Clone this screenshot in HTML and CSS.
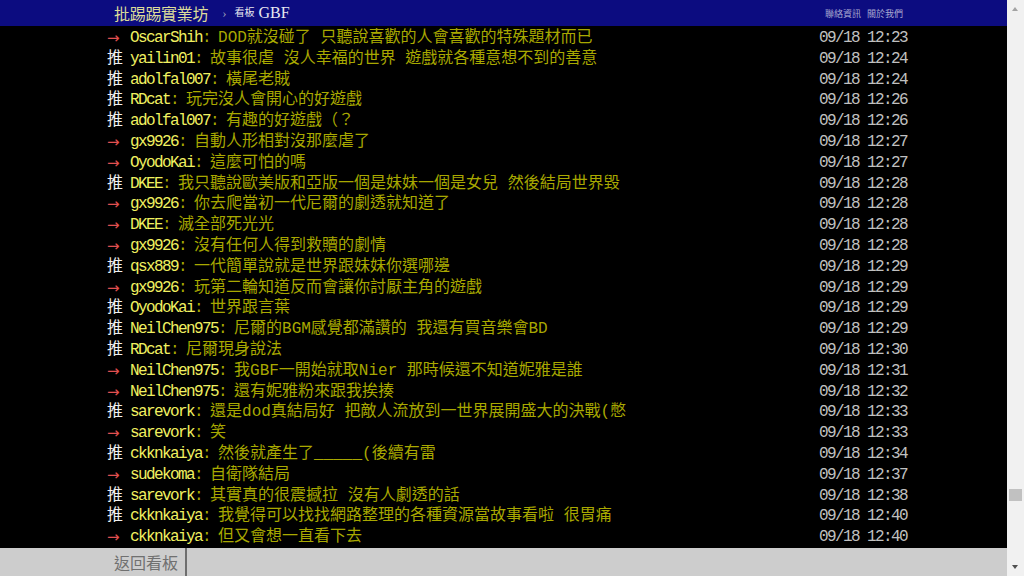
FILE: index.html
```html
<!DOCTYPE html>
<html>

<head>
    <meta charset="UTF-8">
    <title>批踢踢實業坊 › 看板 GBF</title>
    <meta name="viewport" content="width=device-width, initial-scale=1.0">
    <link rel="stylesheet" href="styles.css">
</head>

<body>
    <div class="page">
        <div class="topbar">
            <a class="logo">批踢踢實業坊</a>
            <span class="caret">›</span>
            <a class="board"><span class="board-label">看板</span> GBF</a>
            <div class="right-links">
                <a>聯絡資訊</a>
                <a>關於我們</a>
            </div>
        </div>

        <div class="main">
            <div class="push"><span class="tag arrow">→</span><span class="userid">OscarShih</span><span class="sep">: </span><span class="content">DOD就沒碰了 只聽說喜歡的人會喜歡的特殊題材而已</span><span class="time">09/18 12:23</span></div>
            <div class="push"><span class="tag">推</span><span class="userid">yailin01</span><span class="sep">: </span><span class="content">故事很虐 沒人幸福的世界 遊戲就各種意想不到的善意</span><span class="time">09/18 12:24</span></div>
            <div class="push"><span class="tag">推</span><span class="userid">adolfal007</span><span class="sep">: </span><span class="content">橫尾老賊</span><span class="time">09/18 12:24</span></div>
            <div class="push"><span class="tag">推</span><span class="userid">RDcat</span><span class="sep">: </span><span class="content">玩完沒人會開心的好遊戲</span><span class="time">09/18 12:26</span></div>
            <div class="push"><span class="tag">推</span><span class="userid">adolfal007</span><span class="sep">: </span><span class="content">有趣的好遊戲（？</span><span class="time">09/18 12:26</span></div>
            <div class="push"><span class="tag arrow">→</span><span class="userid">gx9926</span><span class="sep">: </span><span class="content">自動人形相對沒那麼虐了</span><span class="time">09/18 12:27</span></div>
            <div class="push"><span class="tag arrow">→</span><span class="userid">OyodoKai</span><span class="sep">: </span><span class="content">這麼可怕的嗎</span><span class="time">09/18 12:27</span></div>
            <div class="push"><span class="tag">推</span><span class="userid">DKEE</span><span class="sep">: </span><span class="content">我只聽說歐美版和亞版一個是妹妹一個是女兒 然後結局世界毀</span><span class="time">09/18 12:28</span></div>
            <div class="push"><span class="tag arrow">→</span><span class="userid">gx9926</span><span class="sep">: </span><span class="content">你去爬當初一代尼爾的劇透就知道了</span><span class="time">09/18 12:28</span></div>
            <div class="push"><span class="tag arrow">→</span><span class="userid">DKEE</span><span class="sep">: </span><span class="content">滅全部死光光</span><span class="time">09/18 12:28</span></div>
            <div class="push"><span class="tag arrow">→</span><span class="userid">gx9926</span><span class="sep">: </span><span class="content">沒有任何人得到救贖的劇情</span><span class="time">09/18 12:28</span></div>
            <div class="push"><span class="tag">推</span><span class="userid">qsx889</span><span class="sep">: </span><span class="content">一代簡單說就是世界跟妹妹你選哪邊</span><span class="time">09/18 12:29</span></div>
            <div class="push"><span class="tag arrow">→</span><span class="userid">gx9926</span><span class="sep">: </span><span class="content">玩第二輪知道反而會讓你討厭主角的遊戲</span><span class="time">09/18 12:29</span></div>
            <div class="push"><span class="tag">推</span><span class="userid">OyodoKai</span><span class="sep">: </span><span class="content">世界跟言葉</span><span class="time">09/18 12:29</span></div>
            <div class="push"><span class="tag">推</span><span class="userid">NeilChen975</span><span class="sep">: </span><span class="content">尼爾的BGM感覺都滿讚的 我還有買音樂會BD</span><span class="time">09/18 12:29</span></div>
            <div class="push"><span class="tag">推</span><span class="userid">RDcat</span><span class="sep">: </span><span class="content">尼爾現身說法</span><span class="time">09/18 12:30</span></div>
            <div class="push"><span class="tag arrow">→</span><span class="userid">NeilChen975</span><span class="sep">: </span><span class="content">我GBF一開始就取Nier 那時候還不知道妮雅是誰</span><span class="time">09/18 12:31</span></div>
            <div class="push"><span class="tag arrow">→</span><span class="userid">NeilChen975</span><span class="sep">: </span><span class="content">還有妮雅粉來跟我挨揍</span><span class="time">09/18 12:32</span></div>
            <div class="push"><span class="tag">推</span><span class="userid">sarevork</span><span class="sep">: </span><span class="content">還是dod真結局好 把敵人流放到一世界展開盛大的決戰(憋</span><span class="time">09/18 12:33</span></div>
            <div class="push"><span class="tag arrow">→</span><span class="userid">sarevork</span><span class="sep">: </span><span class="content">笑</span><span class="time">09/18 12:33</span></div>
            <div class="push"><span class="tag">推</span><span class="userid">ckknkaiya</span><span class="sep">: </span><span class="content">然後就產生了_____(後續有雷</span><span class="time">09/18 12:34</span></div>
            <div class="push"><span class="tag arrow">→</span><span class="userid">sudekoma</span><span class="sep">: </span><span class="content">自衛隊結局</span><span class="time">09/18 12:37</span></div>
            <div class="push"><span class="tag">推</span><span class="userid">sarevork</span><span class="sep">: </span><span class="content">其實真的很震撼拉 沒有人劇透的話</span><span class="time">09/18 12:38</span></div>
            <div class="push"><span class="tag">推</span><span class="userid">ckknkaiya</span><span class="sep">: </span><span class="content">我覺得可以找找網路整理的各種資源當故事看啦 很胃痛</span><span class="time">09/18 12:40</span></div>
            <div class="push"><span class="tag arrow">→</span><span class="userid">ckknkaiya</span><span class="sep">: </span><span class="content">但又會想一直看下去</span><span class="time">09/18 12:40</span></div>
        </div>

        <div class="action-bar">
            <a class="btn">返回看板</a>
        </div>
    </div>

    <div class="scrollbar">
        <div class="scroll-arrow up"></div>
        <div class="scroll-track">
            <div class="scroll-thumb"></div>
        </div>
        <div class="scroll-arrow down"></div>
    </div>
</body>

</html>
```

FILE: styles.css
```css
html,
body {
    margin: 0;
    height: 100%;
}

body {
    display: flex;
    overflow: hidden;
    background: #000;
    font-family: "Liberation Mono", "Noto Sans CJK TC", monospace;
}

.page {
    flex: 1;
    display: flex;
    flex-direction: column;
    min-width: 0;
}

/* top bar */
.topbar {
    height: 26px;
    background: #0c0c80;
    display: flex;
    align-items: center;
    padding-left: 114px;
    padding-right: 104px;
    font-family: "Liberation Serif", "Noto Sans CJK TC", serif;
}

.logo {
    color: #dcdc9a;
    font-size: 16px;
    font-family: "Noto Sans CJK TC", sans-serif;
    letter-spacing: -0.3px;
}

.caret {
    color: #9a9ab8;
    font-size: 13px;
    margin-left: 14px;
}

.board {
    color: #e8e8f0;
    font-size: 16px;
    margin-left: 8px;
}

.board-label {
    font-size: 10px;
    font-family: "Noto Sans CJK TC", sans-serif;
    vertical-align: 2px;
}

.right-links {
    margin-left: auto;
    display: flex;
    gap: 6px;
    font-size: 9px;
    font-family: "Noto Sans CJK TC", sans-serif;
    color: #a8a8d0;
}

/* push list */
.main {
    flex: 1;
    padding-top: 2px;
}

.push {
    width: 800px;
    margin-left: 107px;
    height: 20.8px;
    line-height: 20.8px;
    font-size: 16px;
    white-space: pre;
    display: flex;
}

.tag {
    width: 23px;
    flex: none;
    color: #f0f0f0;
}

.tag.arrow {
    color: #e05050;
    font-family: "DejaVu Sans", sans-serif;
    font-size: 15px;
}

.userid {
    color: #f0f060;
    letter-spacing: -1.6px;
}

.sep {
    color: #a8a800;
    letter-spacing: -1.6px;
}

.content {
    color: #a8a800;
}

.time {
    margin-left: auto;
    color: #c0c0c0;
    letter-spacing: -1.6px;
}

/* bottom action bar */
.action-bar {
    height: 28px;
    background: #cdcdcd;
    display: flex;
    padding-left: 106px;
}

.btn {
    display: flex;
    align-items: center;
    padding: 0 7px 0 8px;
    border-right: 2px solid #6e6e6e;
    color: #707070;
    font-size: 16px;
    font-family: "Noto Sans CJK TC", sans-serif;
}

/* fake window scrollbar */
.scrollbar {
    width: 17px;
    background: #f1f1f1;
    display: flex;
    flex-direction: column;
}

.scroll-arrow {
    height: 17px;
    position: relative;
}

.scroll-arrow::after {
    content: "";
    position: absolute;
    left: 5px;
    border-left: 3.5px solid transparent;
    border-right: 3.5px solid transparent;
}

.scroll-arrow.up::after {
    top: 7px;
    border-bottom: 4px solid #a3a3a3;
}

.scroll-arrow.down::after {
    top: 6px;
    border-top: 4px solid #505050;
}

.scroll-track {
    flex: 1;
    position: relative;
}

.scroll-thumb {
    position: absolute;
    left: 2px;
    right: 2px;
    top: 472px;
    height: 12px;
    background: #c1c1c1;
}
```
